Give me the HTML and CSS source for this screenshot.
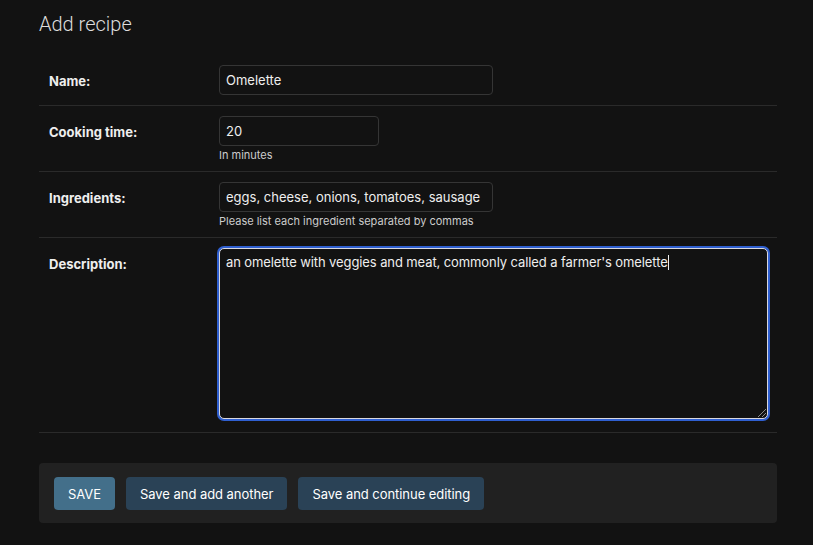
FILE: index.html
```html
<!DOCTYPE html>
<html lang="en">
<head>
<meta charset="utf-8">
<title>Add recipe</title>
<link rel="stylesheet" href="styles.css">
</head>
<body>
<div class="content">
  <h1 class="title">Add recipe</h1>
  <form class="form">
    <div class="form-row">
      <label class="label" for="id_name">Name:</label>
      <div class="field">
        <input class="input input-text" id="id_name" type="text" value="Omelette">
      </div>
    </div>
    <div class="form-row">
      <label class="label" for="id_time">Cooking time:</label>
      <div class="field">
        <input class="input input-num" id="id_time" type="text" value="20">
        <div class="help">In minutes</div>
      </div>
    </div>
    <div class="form-row">
      <label class="label" for="id_ing">Ingredients:</label>
      <div class="field">
        <input class="input input-text" id="id_ing" type="text" value="eggs, cheese, onions, tomatoes, sausage">
        <div class="help">Please list each ingredient separated by commas</div>
      </div>
    </div>
    <div class="form-row form-row-last">
      <label class="label" for="id_desc">Description:</label>
      <div class="field">
        <div class="textarea">an omelette with veggies and meat, commonly called a farmer's omelette<span class="caret"></span><span class="grip"></span></div>
      </div>
    </div>
    <div class="submit-row">
      <button type="button" class="btn btn-default">SAVE</button>
      <button type="button" class="btn">Save and add another</button>
      <button type="button" class="btn">Save and continue editing</button>
    </div>
  </form>
</div>
</body>
</html>
```
FILE: styles.css
```css
html, body {
  margin: 0;
  padding: 0;
  background: #121212;
  color: #eeeeee;
  font-family: Inter, "Noto Sans", sans-serif;
  font-size: 13px;
}
.content {
  padding: 0 36px 0 39px;
}
.title {
  margin: 12px 0 19px;
  font-family: Roboto, Inter, sans-serif;
  font-size: 20px;
  line-height: 24px;
  font-weight: 300;
  color: #dddddd;
}
.form {
  margin: 0;
}
.form-row {
  display: flex;
  padding: 10px;
  border-bottom: 1px solid #2a2a2a;
}
.form-row-last {
  padding-bottom: 13px;
}
.label {
  width: 160px;
  flex: none;
  padding: 8px 10px 0 0;
  font-weight: 700;
  line-height: 16px;
  color: #eeeeee;
}
.field {
  display: flex;
  flex-direction: column;
  align-items: flex-start;
}
.input {
  box-sizing: border-box;
  height: 30px;
  margin: 0;
  padding: 5px 6px;
  background: #121212;
  color: #eeeeee;
  border: 1px solid #353535;
  border-radius: 4px;
  font-family: inherit;
  font-size: 13px;
  outline: none;
}
.input-text {
  width: 274px;
}
.input-num {
  width: 160px;
}
.help {
  margin-top: 2px;
  padding-top: 1px;
  font-size: 11px;
  line-height: 12px;
  color: #cccccc;
}
.textarea {
  position: relative;
  box-sizing: border-box;
  width: 549px;
  height: 171px;
  padding: 5px 6px;
  background: #121212;
  color: #eeeeee;
  border: 1px solid #d8d8e0;
  border-radius: 5px;
  box-shadow: 0 0 0 2px #2f5fd0;
  line-height: 16px;
  font-size: 13px;
  letter-spacing: -0.1px;
}
.caret {
  display: inline-block;
  width: 1px;
  height: 15px;
  background: #eeeeee;
  vertical-align: -3px;
}
.grip {
  position: absolute;
  right: 1px;
  bottom: 1px;
  width: 8px;
  height: 8px;
  background: linear-gradient(135deg, transparent 45%, #888 45%, #888 52%, transparent 52%, transparent 70%, #888 70%, #888 77%, transparent 77%);
}
.submit-row {
  display: flex;
  gap: 11px;
  margin-top: 30px;
  padding: 14px 15px 13px;
  background: #212121;
  border-radius: 4px;
}
.btn {
  height: 33px;
  margin: 0;
  padding: 0 14px;
  border: none;
  border-radius: 4px;
  background: #2a4256;
  color: #ffffff;
  font-family: inherit;
  font-size: 13px;
  letter-spacing: -0.05px;
  cursor: pointer;
}
.btn-default {
  background: #436f8a;
}
```
